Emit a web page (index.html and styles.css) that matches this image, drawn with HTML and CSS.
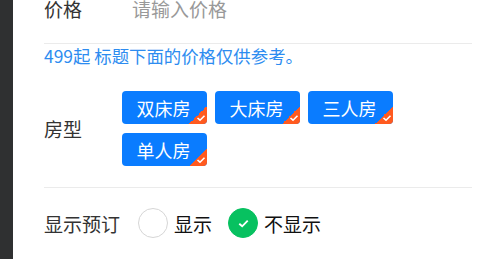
FILE: index.html
```html
<!DOCTYPE html>
<html lang="zh">
<head>
<meta charset="utf-8">
<link rel="stylesheet" href="styles.css">
</head>
<body>
<div class="page">
  <aside class="side"></aside>
  <main class="content">
    <div class="row price-row">
      <span class="label">价格</span>
      <span class="placeholder">请输入价格</span>
    </div>
    <div class="tip">499起 标题下面的价格仅供参考。</div>
    <div class="row room-row">
      <span class="label label-room">房型</span>
      <div class="tags">
        <span class="tag">双床房<i class="corner"><svg viewBox="0 0 10 8" width="10" height="8"><path d="M1.5 4 L4 6.2 L8.5 1.8" fill="none" stroke="#fff" stroke-width="1.6"/></svg></i></span>
        <span class="tag">大床房<i class="corner"><svg viewBox="0 0 10 8" width="10" height="8"><path d="M1.5 4 L4 6.2 L8.5 1.8" fill="none" stroke="#fff" stroke-width="1.6"/></svg></i></span>
        <span class="tag">三人房<i class="corner"><svg viewBox="0 0 10 8" width="10" height="8"><path d="M1.5 4 L4 6.2 L8.5 1.8" fill="none" stroke="#fff" stroke-width="1.6"/></svg></i></span>
        <span class="tag">单人房<i class="corner"><svg viewBox="0 0 10 8" width="10" height="8"><path d="M1.5 4 L4 6.2 L8.5 1.8" fill="none" stroke="#fff" stroke-width="1.6"/></svg></i></span>
      </div>
    </div>
    <div class="row radio-row">
      <span class="label label-wide">显示预订</span>
      <label class="radio"><span class="circle"></span>显示</label>
      <label class="radio"><span class="circle on"><svg viewBox="0 0 16 16" width="15" height="15"><path d="M3.5 8.2 L6.6 11 L12.5 5" fill="none" stroke="#fff" stroke-width="2"/></svg></span>不显示</label>
    </div>
  </main>
</div>
</body>
</html>
```
FILE: styles.css
```css
html, body {
  margin: 0;
  padding: 0;
  background: #fff;
  overflow: hidden;
}
body {
  font-family: "Noto Sans CJK SC", "Noto Sans", sans-serif;
  color: #222;
}
.page {
  display: flex;
  height: 259px;
}
.side {
  width: 13px;
  flex: none;
  background: #2f3031;
}
.content {
  flex: 1;
  padding: 0 23px 0 31px;
}
.row {
  display: flex;
  align-items: center;
}
.label {
  font-size: 19px;
  width: 88px;
  flex: none;
  color: #333;
}
.price-row {
  height: 70px;
  margin-top: -27px;
  border-bottom: 1px solid #ebebeb;
  line-height: 1;
}
.placeholder {
  font-size: 19px;
  color: #999;
}
.tip {
  font-size: 17.4px;
  color: #2d8cf0;
  line-height: 24px;
}
.room-row {
  padding: 23px 0 21px;
  border-bottom: 1px solid #ebebeb;
}
.label-room {
  width: 78px;
}
.label-wide {
  width: 94px;
}
.tags {
  display: flex;
  flex-wrap: wrap;
  gap: 9px 8px;
  width: 290px;
}
.tag {
  position: relative;
  overflow: hidden;
  width: 85px;
  height: 33px;
  box-sizing: border-box;
  border-radius: 4px;
  background: #0a7cff;
  color: #fff;
  font-size: 18px;
  display: flex;
  align-items: center;
  justify-content: center;
  padding-right: 2px;
}
.corner {
  position: absolute;
  right: 0;
  bottom: 0;
  width: 18px;
  height: 18px;
  background: linear-gradient(135deg, transparent 50%, #ff5a1f 50%);
}
.corner svg {
  position: absolute;
  right: 1px;
  bottom: 2px;
}
.radio-row {
  padding-top: 20px;
  font-size: 19px;
}
.radio {
  display: flex;
  align-items: center;
  color: #111;
  margin-right: 16px;
}
.circle {
  width: 30px;
  height: 30px;
  box-sizing: border-box;
  border: 1px solid #d6d6d6;
  border-radius: 50%;
  margin-right: 6px;
  display: flex;
  align-items: center;
  justify-content: center;
}
.circle.on {
  background: #07c160;
  border-color: #07c160;
}
```
